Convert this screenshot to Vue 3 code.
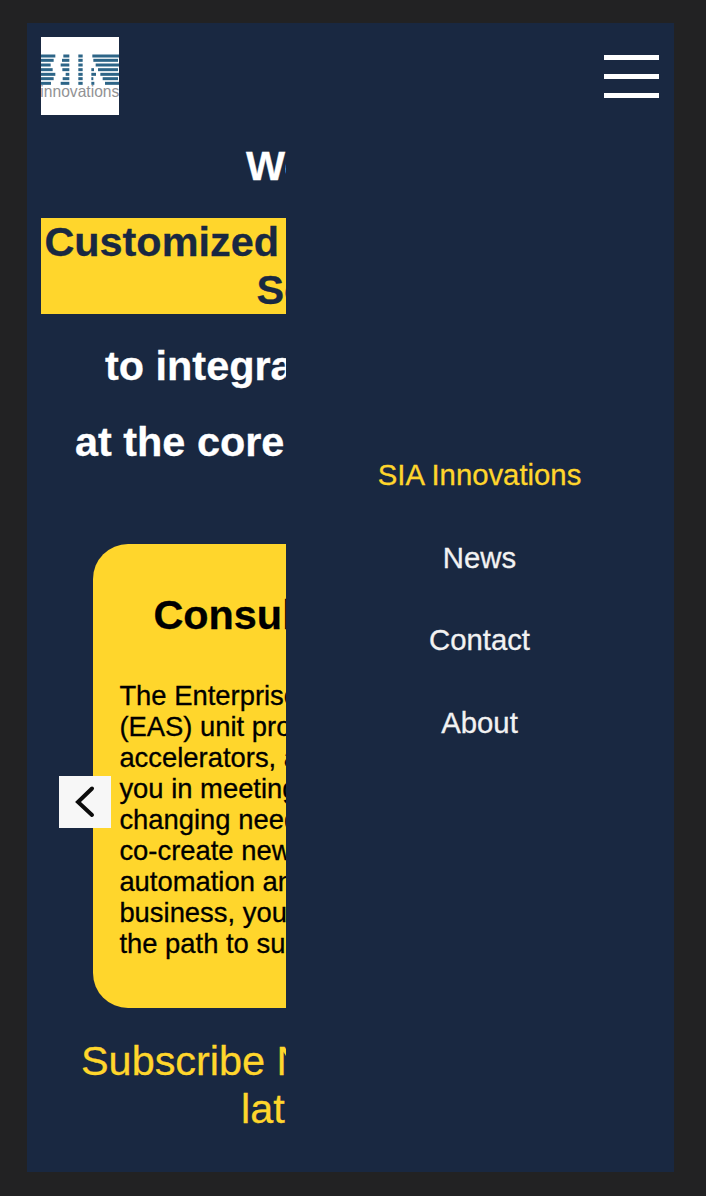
<script setup>
const bars = [
  [57, [[0, 43], [67, 85], [112, 125], [154, 234]]],
  [70, [[0, 38], [63, 85], [112, 125], [157, 231]]],
  [84, [[0, 29], [59, 85], [112, 125], [164, 234]]],
  [98, [[0, 35], [64, 85], [112, 125], [151, 159], [171, 231]]],
  [112, [[0, 43], [74, 85], [112, 125], [151, 165], [178, 234]]],
  [125, [[0, 38], [65, 85], [112, 125], [151, 157], [185, 231]]],
  [139, [[0, 30], [59, 85], [112, 125], [151, 160], [192, 234]]],
]
const stripes = bars.flatMap(([y, spans]) => spans.map(([a, b]) => ({ y, x: a, w: b - a })))
const paragraph = ['The Enterprise', '(EAS) unit prov', 'accelerators, a', 'you in meeting', 'changing need', 'co-create new', 'automation and', 'business, your', 'the path to suc']
const menu = ['SIA Innovations', 'News', 'Contact', 'About']
</script>

<template>
  <div class="frame">
    <div class="screen">
      <main class="content">
        <svg class="logo" viewBox="0 0 234 234">
          <rect width="234" height="234" fill="#fff" />
          <rect v-for="(s, i) in stripes" :key="i" :x="s.x" :y="s.y - 4.5" :width="s.w" height="9" fill="#2d6587" />
          <text x="-2" y="181" textLength="237" lengthAdjust="spacingAndGlyphs" font-size="47" fill="#929294">innovations</text>
        </svg>
        <h2 class="first">We</h2>
        <h2 class="mark"><span>Customized</span><span class="second">So</span></h2>
        <h2 class="third">to integra</h2>
        <h2 class="fourth">at the core</h2>
        <section class="card">
          <h2>Consul</h2>
          <p><span v-for="line in paragraph" :key="line">{{ line }}</span></p>
          <button class="prev" aria-label="Previous">
            <svg viewBox="0 0 52 52"><path d="M33 12.5 19 26 33 39" fill="none" stroke="#0c0c0c" stroke-width="4" stroke-linecap="round" /></svg>
          </button>
        </section>
        <div class="subscribe"><span>Subscribe N</span><span class="latest">lat</span></div>
      </main>
      <aside class="panel">
        <button class="burger" aria-label="Menu"><i /><i /><i /></button>
        <nav><a v-for="(m, i) in menu" :key="m" :class="{ active: i === 0 }">{{ m }}</a></nav>
      </aside>
    </div>
  </div>
</template>

<style>
body { background: #222223; }
</style>

<style scoped>
.frame { box-sizing: border-box; width: 706px; height: 1196px; padding: 23px 32px 24px 27px; background: #222223; font-family: "Liberation Sans", Arial, sans-serif; }
.screen { display: grid; grid-template-columns: 259px 388px; width: 647px; height: 1149px; background: #192841; }
.content { overflow: hidden; min-width: 0; height: 1149px; white-space: nowrap; }
.logo { display: block; width: 78px; height: 78px; margin: 14.4px 0 0 14.4px; }
h2 { margin: 0; font-size: 41.4px; line-height: 48px; font-weight: 700; color: #fff; -webkit-text-stroke: 0.3px currentColor; }
.first { margin-top: 26.6px; padding-left: 219px; }
.mark { display: flex; flex-direction: column; box-sizing: border-box; height: 96px; margin: 28.4px 0 0 14.4px; padding-left: 3px; background: #ffd62c; color: #192841; }
.mark span { position: relative; top: -0.4px; }
.second { padding-left: 212px; }
.third { margin-top: 27.6px; padding-left: 78px; }
.fourth { margin-top: 28px; padding-left: 48px; }
.card { position: relative; box-sizing: border-box; width: 514px; height: 464px; margin: 78px 0 0 66.4px; padding: 47px 25px 0 26px; border-radius: 35px; background: #ffd62c; }
.card h2 { color: #000; padding-left: 34px; }
.card p { display: flex; flex-direction: column; margin: 41px 0 0; font-size: 27.4px; line-height: 31px; color: #000; -webkit-text-stroke: 0.3px currentColor; }
.prev { position: absolute; left: -34.4px; top: 232px; width: 52px; height: 52px; padding: 0; border: 0; background: #f7f7f7; }
.prev svg { display: block; width: 52px; height: 52px; }
.subscribe { display: flex; flex-direction: column; margin-top: 29.4px; padding-left: 54px; font-size: 41.4px; line-height: 48px; color: #ffd62c; -webkit-text-stroke: 0.3px currentColor; }
.latest { padding-left: 160px; }
.panel { display: flex; flex-direction: column; background: #192841; }
.burger { display: flex; flex-direction: column; gap: 14px; align-self: flex-end; margin: 32px 15px 0 0; padding: 0; border: 0; background: none; }
.burger i { display: block; width: 55px; height: 5px; background: #fff; }
nav { display: flex; flex-direction: column; align-items: center; gap: 49.6px; margin: 360px 1px 0 0; font-size: 29.3px; line-height: 33px; color: #f2f2f2; -webkit-text-stroke: 0.3px currentColor; }
.active { color: #ffd62c; }
</style>
